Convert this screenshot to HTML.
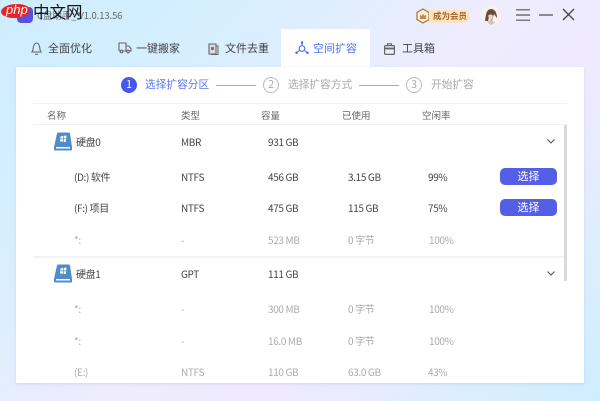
<!DOCTYPE html>
<html lang="zh"><head><meta charset="utf-8">
<style>
html,body{margin:0;padding:0}
#p{position:relative;width:600px;height:401px;overflow:hidden;font-family:"Noto Sans CJK SC","Liberation Sans",sans-serif;font-size:10px;letter-spacing:-.35px;color:#444;
background:linear-gradient(135deg,#cdeeff 0%,#d6efff 25%,#efecfe 50%,#efeafe 68%,#dceefe 85%,#cdeeff 100%)}
.t{position:absolute;white-space:nowrap;line-height:14px}
.g{color:#aaa}
.h{color:#666}
.tab{font-size:11px;letter-spacing:0;color:#444;line-height:16px}
.s{font-size:10.7px;letter-spacing:0}
svg{position:absolute;overflow:visible}
.btn{position:absolute;left:500px;width:57px;height:17px;border-radius:5px;background:#545fe6;color:#fff;text-align:center;line-height:17px;font-size:11px;letter-spacing:0}
.line{position:absolute;height:1px;background:#f1f1f1}
.step{position:absolute;width:40px;height:1px;background:#aaa}
.c{position:absolute;width:14px;height:14px;border:1px solid #bbb;border-radius:50%;color:#aaa;text-align:center;line-height:14px;font-size:10.5px;letter-spacing:0}
</style></head><body><div id="p">

<!-- app logo -->
<div style="position:absolute;left:17px;top:7px;width:16px;height:16px;border-radius:4px;background:#5a50e0"></div>
<div class="t" style="left:37px;top:8px;font-size:9.500px;color:#666;letter-spacing:-.1px">C盘助手_ V1.0.13.56</div>

<!-- php watermark -->
<div style="position:absolute;left:1px;top:4px;width:29px;height:14px;border-radius:50%;background:#e8262a;transform:rotate(-4deg)"></div>
<div class="t" style="left:6px;top:3px;color:#fff;font:italic 13px/14px 'Liberation Sans',sans-serif;letter-spacing:0">php</div>
<div class="t" style="left:33px;top:3px;color:#141414;font-size:16.500px;line-height:17px;letter-spacing:0">中文网</div>

<!-- right header -->
<svg style="left:416px;top:8px" width="14" height="16" viewBox="0 0 14 16"><path d="M7 1 13 4.500V11.500L7 15 1 11.500V4.500Z" fill="#fdf1de" stroke="#b0743a" stroke-width="1.300"/><path d="M4 11V6.500L5.800 8 7 5.500 8.200 8 10 6.500V11Z" fill="#c08a4a"/></svg>
<div style="position:absolute;left:429px;top:10px;width:41px;height:13px;border-radius:0 7px 7px 0;background:#fde3bf"></div>
<div class="t" style="left:433px;top:10px;font-size:8.500px;line-height:13px;letter-spacing:0;color:#a9672c;font-weight:bold">成为会员</div>
<svg style="left:481px;top:6px" width="20" height="20" viewBox="0 0 20 20"><circle cx="10" cy="10" r="10" fill="#f6f1ec"/><path d="M4 15C5 7 6 3 10 3S16 7 16 12L13 8 11 14 8 11 7 15Z" fill="#6e4a3c"/><path d="M7 10C8 8 11 8 12 10L11 13 9 13Z" fill="#e9d6c8"/><path d="M6 16 10 13 14 17 10 19Z" fill="#cfc4ba"/></svg>
<svg style="left:516px;top:9px" width="14" height="12" viewBox="0 0 14 12" fill="none" stroke="#555" stroke-width="1.200"><path d="M0 .8H14M0 6H14M0 11.200H14"/></svg>
<svg style="left:539px;top:14px" width="14" height="2"><path d="M0 1H14" stroke="#555" stroke-width="1.300"/></svg>
<svg style="left:563px;top:9px" width="11" height="11" viewBox="0 0 11 11" fill="none" stroke="#444" stroke-width="1.300"><path d="M0 0 11 11M11 0 0 11"/></svg>

<!-- tabs -->
<div style="position:absolute;left:281px;top:29px;width:89px;height:40px;background:#fff"></div>
<svg style="left:31px;top:42px" width="11" height="13" viewBox="0 0 11 13" fill="none" stroke="#666" stroke-width="1.100"><path d="M1 10C2.500 8 2 6 2.500 4.500 3 2.500 4 1 5.500 1S8 2.500 8.500 4.500C9 6 8.500 8 10 10Z"/><path d="M4 12.300H7"/></svg>
<div class="t tab" style="left:48px;top:40px">全面优化</div>
<svg style="left:118px;top:42px" width="14" height="12" viewBox="0 0 14 12" fill="none" stroke="#666" stroke-width="1.100"><path d="M1 9V1H8V9M8 4H11L13 6.500V9H11.500M8 9H5M1 9H2"/><circle cx="3.500" cy="9.500" r="1.300"/><circle cx="10" cy="9.500" r="1.300"/></svg>
<div class="t tab" style="left:136px;top:40px">一键搬家</div>
<svg style="left:208px;top:43px" width="11" height="12" viewBox="0 0 11 12"><path d="M1 1H8V11H1Z" fill="#ddd" stroke="#666" stroke-width="1.100"/><path d="M8 3H10V11.500H3" fill="none" stroke="#666"/><path d="M3 4H6V7H3Z" fill="#777"/></svg>
<div class="t tab" style="left:225px;top:40px">文件去重</div>
<svg style="left:295px;top:41px" width="14" height="13" viewBox="0 0 14 13" fill="none" stroke="#4a6cf0" stroke-width="1.100"><circle cx="7" cy="7.500" r="2.800"/><path d="M7 1V4.500M4.500 9.500 2 11.500M9.500 9.500 12 11.500"/><circle cx="7" cy="1.500" r=".7" fill="#4a6cf0"/><circle cx="1.500" cy="11.800" r=".7" fill="#4a6cf0"/><circle cx="12.500" cy="11.800" r=".7" fill="#4a6cf0"/></svg>
<div class="t tab" style="left:313px;top:40px;color:#4e74ee">空间扩容</div>
<svg style="left:384px;top:43px" width="11" height="12" viewBox="0 0 11 12" fill="none" stroke="#666" stroke-width="1.200"><rect x=".6" y="2.600" width="9.800" height="8.800" rx="1"/><path d="M3.500 2.600V.8H7.500V2.600"/><path d="M.6 5.500H10.400" stroke-width="1.800"/></svg>
<div class="t tab" style="left:402px;top:40px">工具箱</div>

<!-- panel -->
<div style="position:absolute;left:16px;top:67px;width:568px;height:316px;background:#fff;box-shadow:0 1px 3px rgba(140,130,230,.25)"></div>

<!-- steps -->
<div style="position:absolute;left:121px;top:77px;width:16px;height:16px;border-radius:50%;background:#4459e8;color:#fff;text-align:center;line-height:16px;font-size:10.500px;letter-spacing:0">1</div>
<div class="t s" style="left:145px;top:78px;color:#5b78ee">选择扩容分区</div>
<div class="step" style="left:216px;top:85px"></div>
<div class="c" style="left:263px;top:77px">2</div>
<div class="t g s" style="left:288px;top:78px">选择扩容方式</div>
<div class="step" style="left:359px;top:85px"></div>
<div class="c" style="left:406px;top:77px">3</div>
<div class="t g s" style="left:431px;top:78px">开始扩容</div>

<!-- table head -->
<div class="line" style="left:33px;top:103px;width:534px"></div>
<div class="t h" style="left:47px;top:108px;letter-spacing:0;font-size:9.500px">名称</div>
<div class="t h" style="left:181px;top:108px;letter-spacing:0;font-size:9.500px">类型</div>
<div class="t h" style="left:261px;top:108px;letter-spacing:0;font-size:9.500px">容量</div>
<div class="t h" style="left:342px;top:108px;letter-spacing:0;font-size:9.500px">已使用</div>
<div class="t h" style="left:422px;top:108px;letter-spacing:0;font-size:9.500px">空闲率</div>
<div class="line" style="left:33px;top:124px;width:534px"></div>
<div style="position:absolute;left:564px;top:125px;width:3px;height:156px;background:#d9d9d9"></div>

<!-- disk 0 -->
<svg style="left:54px;top:132px" width="18" height="19" viewBox="0 0 18 19"><path d="M3 1.500Q3.300 .5 4.500 .5H14.500Q15.700 .5 16 1.500L18 15V17.500Q18 18.500 17 18.500H1Q0 18.500 0 17.500V15Z" fill="#4f8dc9"/><path d="M2 15H16V16.500H2Z" fill="#fff"/><path d="M6.500 4.500 9 4V6.500H6.300ZM9.700 3.900 12.500 3.500 12.200 6.500H9.700ZM6.200 7.200H9V9.700L6 9.300ZM9.700 7.200H12.100L11.800 10 9.700 9.800Z" fill="#fff"/></svg>
<div class="t" style="left:76px;top:135px">硬盘0</div>
<div class="t" style="left:181px;top:135px">MBR</div>
<div class="t" style="left:268px;top:135px">931 GB</div>
<svg style="left:547px;top:139px" width="8" height="5" viewBox="0 0 8 5" fill="none" stroke="#555" stroke-width="1.100"><path d="M.5.500 4 4 7.500.5"/></svg>

<div class="t" style="left:74px;top:170px">(D:) 软件</div>
<div class="t" style="left:181px;top:170px">NTFS</div>
<div class="t" style="left:268px;top:170px">456 GB</div>
<div class="t" style="left:348px;top:170px">3.15 GB</div>
<div class="t" style="left:428px;top:170px">99%</div>
<div class="btn" style="top:168px">选择</div>

<div class="t" style="left:74px;top:201px">(F:) 项目</div>
<div class="t" style="left:181px;top:201px">NTFS</div>
<div class="t" style="left:268px;top:201px">475 GB</div>
<div class="t" style="left:348px;top:201px">115 GB</div>
<div class="t" style="left:428px;top:201px">75%</div>
<div class="btn" style="top:199px">选择</div>

<div class="t g" style="left:74px;top:233px">*:</div>
<div class="t g" style="left:181px;top:233px">-</div>
<div class="t g" style="left:268px;top:233px">523 MB</div>
<div class="t g" style="left:348px;top:233px">0 字节</div>
<div class="t g" style="left:429px;top:233px">100%</div>

<div style="position:absolute;left:33px;top:256px;width:531px;height:2px;background:#f3f3f3"></div>

<!-- disk 1 -->
<svg style="left:54px;top:264px" width="18" height="19" viewBox="0 0 18 19"><path d="M3 1.500Q3.300 .5 4.500 .5H14.500Q15.700 .5 16 1.500L18 15V17.500Q18 18.500 17 18.500H1Q0 18.500 0 17.500V15Z" fill="#4f8dc9"/><path d="M2 15H16V16.500H2Z" fill="#fff"/><path d="M6.500 4.500 9 4V6.500H6.300ZM9.700 3.900 12.500 3.500 12.200 6.500H9.700ZM6.200 7.200H9V9.700L6 9.300ZM9.700 7.200H12.100L11.800 10 9.700 9.800Z" fill="#fff"/></svg>
<div class="t" style="left:76px;top:267px">硬盘1</div>
<div class="t" style="left:181px;top:267px">GPT</div>
<div class="t" style="left:268px;top:267px">111 GB</div>
<svg style="left:547px;top:271px" width="8" height="5" viewBox="0 0 8 5" fill="none" stroke="#555" stroke-width="1.100"><path d="M.5.500 4 4 7.500.5"/></svg>

<div class="t g" style="left:74px;top:302px">*:</div>
<div class="t g" style="left:181px;top:302px">-</div>
<div class="t g" style="left:268px;top:302px">300 MB</div>
<div class="t g" style="left:348px;top:302px">0 字节</div>
<div class="t g" style="left:429px;top:302px">100%</div>

<div class="t g" style="left:74px;top:334px">*:</div>
<div class="t g" style="left:181px;top:334px">-</div>
<div class="t g" style="left:268px;top:334px">16.0 MB</div>
<div class="t g" style="left:348px;top:334px">0 字节</div>
<div class="t g" style="left:429px;top:334px">100%</div>

<div class="t g" style="left:74px;top:365px">(E:)</div>
<div class="t g" style="left:181px;top:365px">NTFS</div>
<div class="t g" style="left:268px;top:365px">110 GB</div>
<div class="t g" style="left:348px;top:365px">63.0 GB</div>
<div class="t g" style="left:428px;top:365px">43%</div>

</div></body></html>
